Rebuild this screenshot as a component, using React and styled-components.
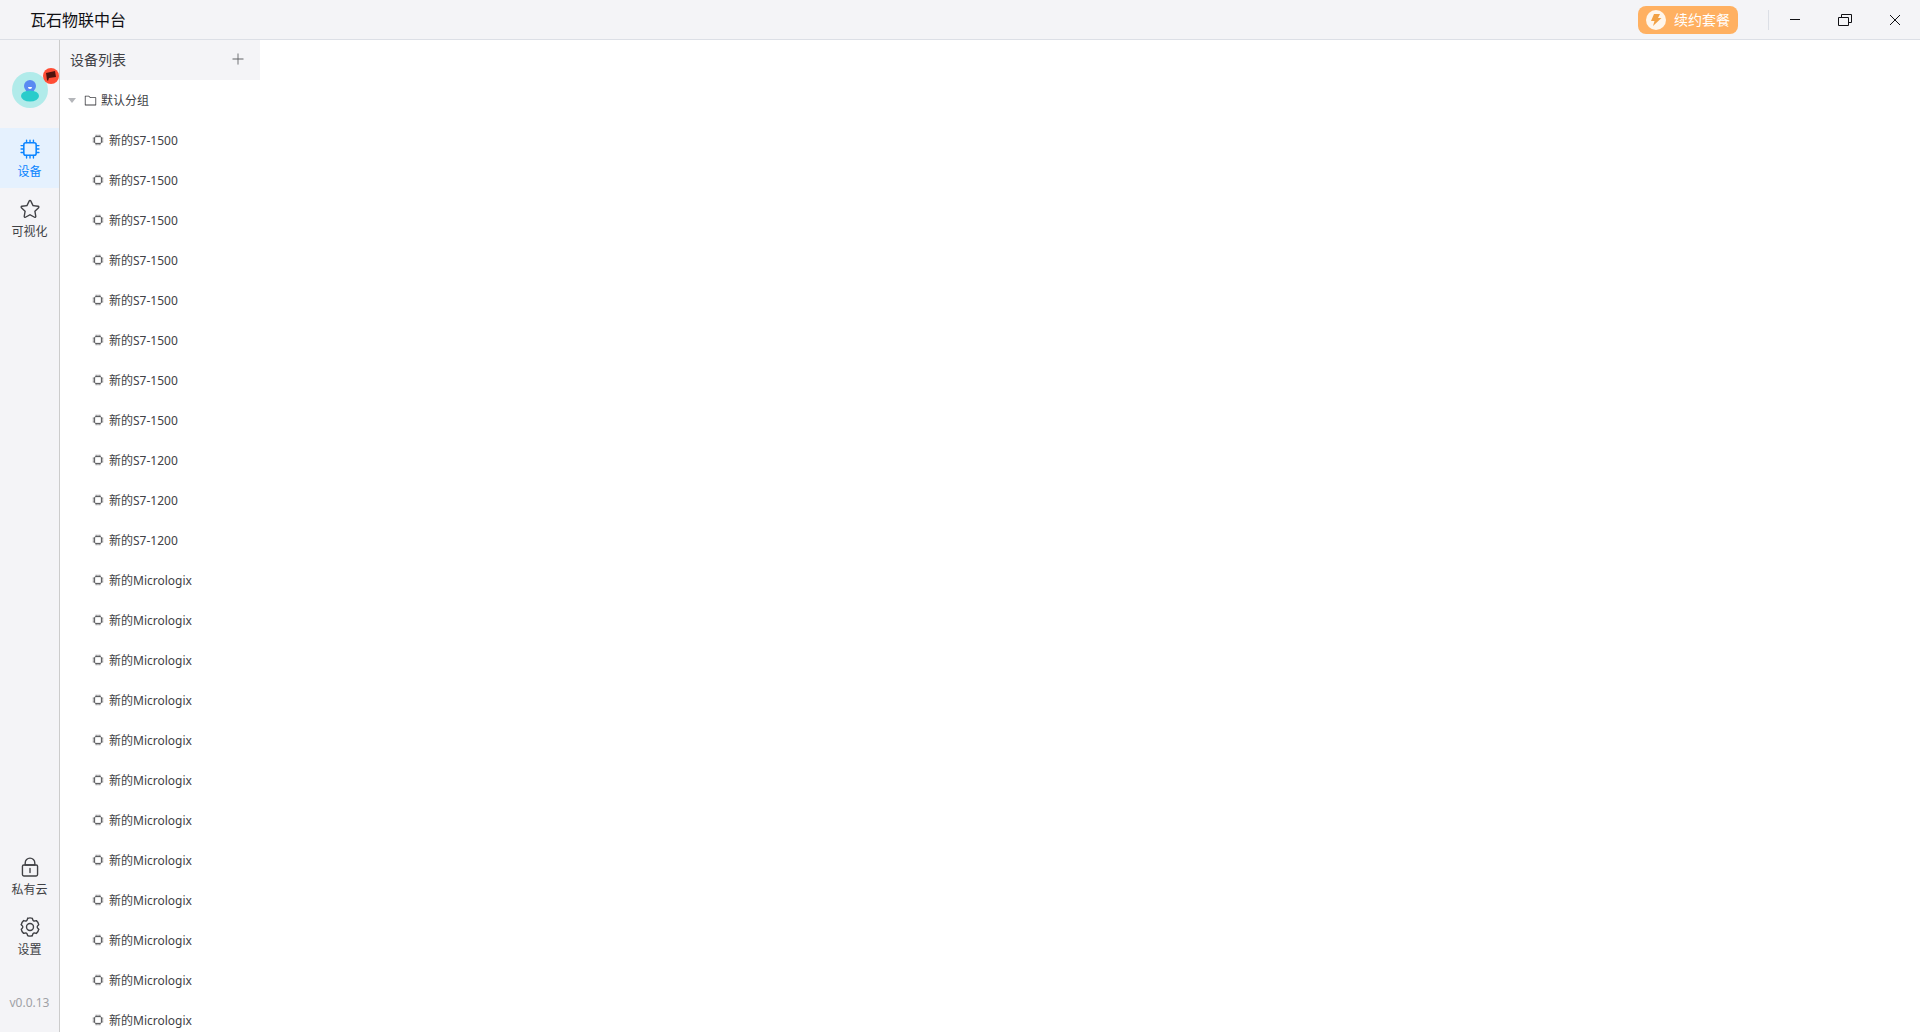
import React from "react";
import styled, { createGlobalStyle } from "styled-components";

const GlobalStyle = createGlobalStyle`
  * {
    box-sizing: border-box;
  }
  body {
    margin: 0;
    color: #404145;
    background: #fff;
    font-family: "Noto Sans", "Noto Sans CJK SC", sans-serif;
    font-size: 12px;
  }
  button {
    padding: 0;
    border: 0;
    background: none;
    color: inherit;
    font: inherit;
    cursor: pointer;
  }
  svg {
    display: block;
    flex: none;
  }
`;

const Page = styled.div`
  height: 100vh;
  display: flex;
  flex-direction: column;
  overflow: hidden;
`;

const TitleBar = styled.header`
  height: 40px;
  flex: none;
  display: flex;
  align-items: center;
  padding-left: 30px;
  background: #f4f4f7;
  border-bottom: 1px solid #dcdfe6;
`;

const AppName = styled.h1`
  flex: 1;
  margin: 0;
  color: #101014;
  font-size: 16px;
  font-weight: 400;
  line-height: 24px;
`;

const RenewButton = styled.button`
  width: 100px;
  height: 28px;
  display: flex;
  align-items: center;
  gap: 8px;
  padding-left: 8px;
  border-radius: 8px;
  background: #ffb061;
  color: #fff;
  font-size: 14px;
  line-height: 20px;
`;

const Divider = styled.span`
  width: 1px;
  height: 20px;
  margin: 0 1px 0 30px;
  background: #dcdfe6;
`;

const WindowButton = styled.button`
  width: 50px;
  height: 39px;
  display: flex;
  align-items: center;
  justify-content: center;
  color: #101014;
`;

const Body = styled.div`
  flex: 1;
  min-height: 0;
  display: flex;
`;

const Nav = styled.nav`
  width: 60px;
  flex: none;
  display: flex;
  flex-direction: column;
  background: #f4f4f7;
  border-right: 1px solid #cccccc;
`;

const Account = styled.button`
  position: relative;
  width: 36px;
  height: 36px;
  margin: 32px 12px 20px;
`;

const Badge = styled.span`
  position: absolute;
  top: -4px;
  right: -11px;
`;

const NavButton = styled.button`
  height: 60px;
  display: flex;
  flex-direction: column;
  align-items: center;
  gap: 3px;
  padding-top: 10px;
  line-height: 18px;
  background: ${(props) => (props.$active ? "#e5f1fe" : "none")};
  color: ${(props) => (props.$active ? "#0a84ff" : "inherit")};
`;

const Spacer = styled.div`
  flex: 1;
`;

const Version = styled.div`
  padding: 28px 0 20px;
  line-height: 18px;
  text-align: center;
  color: #a0a1a6;
`;

const Sidebar = styled.aside`
  width: 200px;
  flex: none;
  display: flex;
  flex-direction: column;
`;

const SidebarHead = styled.div`
  height: 40px;
  flex: none;
  display: flex;
  align-items: center;
  justify-content: space-between;
  padding: 0 15px 0 10px;
  background: #f4f4f7;
`;

const SidebarTitle = styled.h2`
  margin: 0;
  font-size: 14px;
  font-weight: 400;
  line-height: 20px;
`;

const AddButton = styled.button`
  padding-bottom: 2px;
  color: #606266;
`;

const DeviceList = styled.ul`
  flex: 1;
  margin: 0;
  padding: 0;
  list-style: none;
  overflow: hidden;
`;

const Row = styled.button`
  width: 100%;
  height: 40px;
  display: flex;
  align-items: center;
  gap: ${(props) => (props.$group ? 4 : 5)}px;
  padding-left: ${(props) => (props.$group ? 8 : 32)}px;
  text-align: left;
`;

const RowText = styled.span`
  padding-top: 2px;
  line-height: 18px;
  white-space: nowrap;
`;

const Main = styled.main`
  flex: 1;
`;

const Icon = ({ size = 22, children }) => (
  <svg width={size} height={size} viewBox="0 0 1024 1024" fill="currentColor" aria-hidden="true">
    {children}
  </svg>
);

const CpuIcon = ({ size }) => (
  <Icon size={size}>
    <rect x="224" y="224" width="576" height="576" rx="96" fill="none" stroke="currentColor" strokeWidth="72" />
    <path
      d="M352 96v112M512 96v112M672 96v112M352 816v112M512 816v112M672 816v112M96 352h112M96 512h112M96 672h112M816 352h112M816 512h112M816 672h112"
      fill="none"
      stroke="currentColor"
      strokeWidth="64"
      strokeLinecap="round"
    />
  </Icon>
);

const StarIcon = () => (
  <Icon>
    <path d="m512 747.84 228.16 119.936a6.4 6.4 0 0 0 9.28-6.72l-43.52-254.08 184.512-179.904a6.4 6.4 0 0 0-3.52-10.88l-255.104-37.12L517.76 147.904a6.4 6.4 0 0 0-11.52 0L392.192 379.072l-255.104 37.12a6.4 6.4 0 0 0-3.52 10.88L318.08 606.976l-43.584 254.08a6.4 6.4 0 0 0 9.28 6.72zM313.6 924.48a70.4 70.4 0 0 1-102.144-74.24l37.888-220.928L88.96 472.96A70.4 70.4 0 0 1 128 352.896l221.76-32.256 99.2-200.96a70.4 70.4 0 0 1 126.208 0l99.2 200.96 221.824 32.256a70.4 70.4 0 0 1 39.04 120.064L774.72 629.376l37.888 220.928a70.4 70.4 0 0 1-102.144 74.24L512 820.096l-198.4 104.32z" />
  </Icon>
);

const LockIcon = () => (
  <Icon>
    <path d="M224 448a32 32 0 0 0-32 32v384a32 32 0 0 0 32 32h576a32 32 0 0 0 32-32V480a32 32 0 0 0-32-32zm0-64h576a96 96 0 0 1 96 96v384a96 96 0 0 1-96 96H224a96 96 0 0 1-96-96V480a96 96 0 0 1 96-96" />
    <path d="M512 544a32 32 0 0 1 32 32v192a32 32 0 1 1-64 0V576a32 32 0 0 1 32-32m192-160v-64a192 192 0 1 0-384 0v64zM512 64a256 256 0 0 1 256 256v128H256V320A256 256 0 0 1 512 64" />
  </Icon>
);

// one lobe of the gear, repeated every 60 degrees
const SettingIcon = () => (
  <svg
    width="22"
    height="22"
    viewBox="0 0 22 22"
    fill="none"
    stroke="currentColor"
    strokeWidth="1.4"
    strokeLinecap="round"
    aria-hidden="true"
  >
    {[0, 60, 120, 180, 240, 300].map((angle) => (
      <path
        key={angle}
        d="M8.67 2.31Q11 1.4 13.33 2.31C13.9 5 14.75 5.49 17.36 4.64"
        transform={`rotate(${angle} 11 11)`}
      />
    ))}
    <circle cx="11" cy="11" r="3.5" />
  </svg>
);

const FolderIcon = () => (
  <Icon size={13}>
    <path d="M128 192v640h768V320H485.76L357.504 192zm-32-64h287.872l128.384 128H928a32 32 0 0 1 32 32v576a32 32 0 0 1-32 32H96a32 32 0 0 1-32-32V160a32 32 0 0 1 32-32" />
  </Icon>
);

const PlusIcon = () => (
  <Icon size={14}>
    <path d="M480 480V128a32 32 0 0 1 64 0v352h352a32 32 0 1 1 0 64H544v352a32 32 0 1 1-64 0V544H128a32 32 0 0 1 0-64z" />
  </Icon>
);

const CaretIcon = () => (
  <svg width="12" height="8" viewBox="0 0 12 8" aria-hidden="true">
    <path d="M0 2h8L4 7z" fill="#b4b6ba" />
  </svg>
);

const BoltIcon = () => (
  <svg width="20" height="20" viewBox="0 0 20 20" aria-hidden="true">
    <circle cx="10" cy="10" r="10" fill="#fff6ec" />
    <path d="M8 4h6l-2 4h3.500L7 16l1.500-5H5z" fill="#f2a145" />
  </svg>
);

const Avatar = () => (
  <svg width="36" height="36" viewBox="0 0 36 36" aria-hidden="true">
    <circle cx="18" cy="18" r="18" fill="#b1ebea" />
    <circle cx="18" cy="14" r="6" fill="#5a8af2" />
    <ellipse cx="18" cy="24" rx="9" ry="5.500" fill="#29cccb" />
    <path d="M16 15h4a2 2 0 0 1-4 0z" fill="#fff" />
  </svg>
);

const FlagBadge = () => (
  <svg width="16" height="16" viewBox="0 0 16 16" aria-hidden="true">
    <circle cx="8" cy="8" r="8" fill="#ff4d35" />
    <path d="M3 5l9-2 1 6-7 1-1 3-1-1z" fill="#4d120d" />
  </svg>
);

const MinimizeIcon = () => (
  <svg width="10" height="10" viewBox="0 0 10 10" aria-hidden="true">
    <path d="M0 4.500h10" stroke="currentColor" />
  </svg>
);

const RestoreIcon = () => (
  <svg width="14" height="12" viewBox="0 0 14 12" fill="none" stroke="currentColor" aria-hidden="true">
    <path d="M.5 3.500h10v8H.5zM3.500 3.500v-3h10v8h-3" />
  </svg>
);

const CloseIcon = () => (
  <svg width="12" height="12" viewBox="0 0 12 12" stroke="currentColor" aria-hidden="true">
    <path d="M1 1l10 10M11 1L1 11" />
  </svg>
);

const devices = [
  ...Array(8).fill("新的S7-1500"),
  ...Array(3).fill("新的S7-1200"),
  ...Array(12).fill("新的Micrologix"),
];

const App = () => {
  return (
    <Page>
      <GlobalStyle />
      <TitleBar>
        <AppName>瓦石物联中台</AppName>
        <RenewButton>
          <BoltIcon />
          续约套餐
        </RenewButton>
        <Divider />
        <WindowButton aria-label="最小化">
          <MinimizeIcon />
        </WindowButton>
        <WindowButton aria-label="还原">
          <RestoreIcon />
        </WindowButton>
        <WindowButton aria-label="关闭">
          <CloseIcon />
        </WindowButton>
      </TitleBar>
      <Body>
        <Nav>
          <Account aria-label="账号">
            <Avatar />
            <Badge>
              <FlagBadge />
            </Badge>
          </Account>
          <NavButton $active>
            <CpuIcon />
            设备
          </NavButton>
          <NavButton>
            <StarIcon />
            可视化
          </NavButton>
          <Spacer />
          <NavButton>
            <LockIcon />
            私有云
          </NavButton>
          <NavButton>
            <SettingIcon />
            设置
          </NavButton>
          <Version>v0.0.13</Version>
        </Nav>
        <Sidebar>
          <SidebarHead>
            <SidebarTitle>设备列表</SidebarTitle>
            <AddButton aria-label="添加设备">
              <PlusIcon />
            </AddButton>
          </SidebarHead>
          <Row $group aria-expanded="true">
            <CaretIcon />
            <FolderIcon />
            <RowText>默认分组</RowText>
          </Row>
          <DeviceList>
            {devices.map((name, i) => (
              <li key={i}>
                <Row>
                  <CpuIcon size={12} />
                  <RowText>{name}</RowText>
                </Row>
              </li>
            ))}
          </DeviceList>
        </Sidebar>
        <Main />
      </Body>
    </Page>
  );
};

export default App;
